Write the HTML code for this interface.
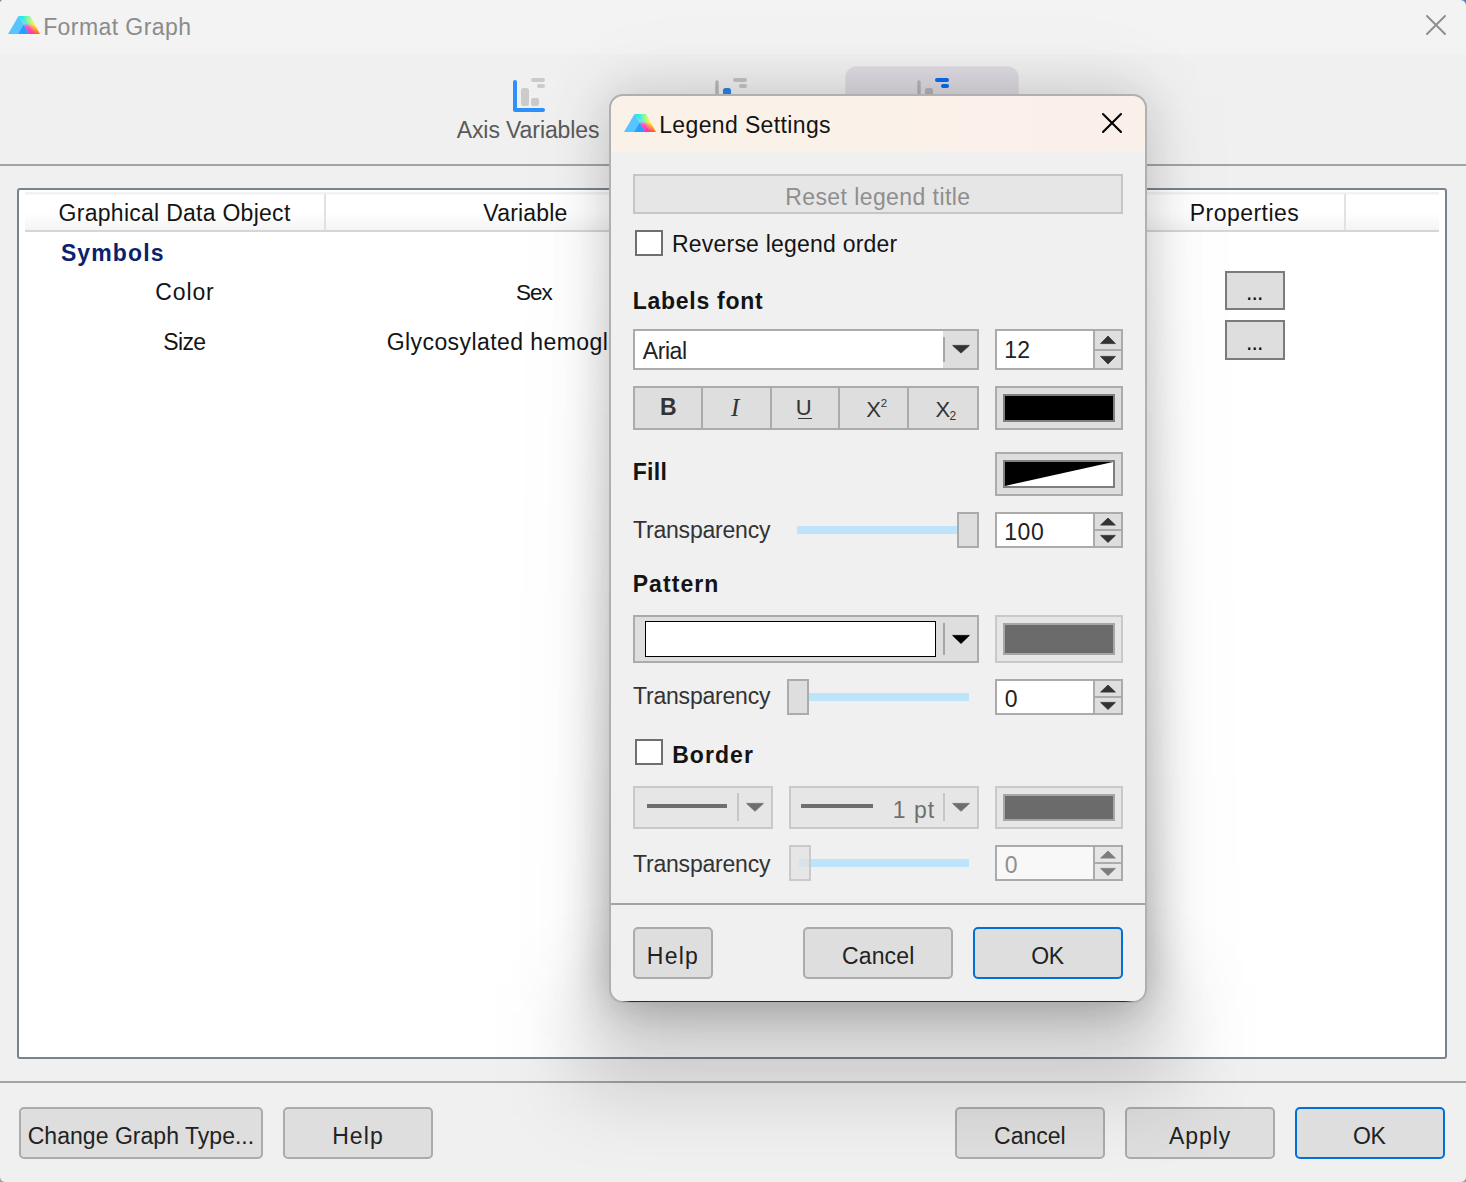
<!DOCTYPE html>
<html lang="en"><head><meta charset="utf-8"><title>Format Graph</title>
<style>
html,body{margin:0;padding:0;}
body{width:1466px;height:1182px;overflow:hidden;background:#f0f0f0;font-family:"Liberation Sans",sans-serif;position:relative;}
#win,#dlgwrap{position:absolute;left:0;top:0;width:1466px;height:1182px;overflow:hidden;}
.a{position:absolute;box-sizing:border-box;}
span.t{position:absolute;white-space:nowrap;font-family:"Liberation Sans",sans-serif;}
.btn{position:absolute;box-sizing:border-box;background:#dedede;border:2px solid #ababab;border-radius:5px;}
.btn.def{border-color:#0070d8;}
.sq{position:absolute;box-sizing:border-box;background:#dedede;border:2px solid #ababab;}
.dis{background:#e6e6e6;border-color:#c9c9c9;}
.hl{position:absolute;height:2px;background:#a3a3a3;}
svg{position:absolute;overflow:visible;}

</style></head>
<body>
<div id="win">
<div class="a" style="left:0;top:0;width:1466px;height:54px;background:#f3f3f3"></div>
<svg style="left:8px;top:16px" width="32" height="18" viewBox="0 0 32 18">
<defs>
<linearGradient id="gR" x1="0" y1="0" x2="0" y2="1"><stop offset="0" stop-color="#86f7a4"/><stop offset=".22" stop-color="#c4fb72"/><stop offset=".48" stop-color="#fdee3c"/><stop offset=".75" stop-color="#ffa62c"/><stop offset="1" stop-color="#ff6612"/></linearGradient>
<linearGradient id="gL" x1="0" y1="0" x2="0" y2="1"><stop offset="0" stop-color="#25e4ea"/><stop offset=".4" stop-color="#5cf0dc"/><stop offset=".58" stop-color="#ff58c2"/><stop offset="1" stop-color="#ff2fb0"/></linearGradient>
<linearGradient id="gM" gradientUnits="userSpaceOnUse" x1="15.75" y1="9" x2="24.33" y2="4"><stop offset="0" stop-color="#fff"/><stop offset=".3" stop-color="#fff"/><stop offset=".85" stop-color="#000"/></linearGradient>
<mask id="mk" maskUnits="userSpaceOnUse" x="0" y="0" width="32" height="18"><rect width="32" height="18" fill="url(#gM)"/></mask>
</defs>
<polygon points="10.5,0 22,0 32,18 21,18" fill="url(#gR)"/>
<polygon points="10.5,0 22,0 32,18 21,18" fill="url(#gL)" mask="url(#mk)"/>
<polygon points="0,18 10.5,0 21,18" fill="#55c4ff"/>
<polygon points="10.3,18 15.7,8.8 21,18" fill="#2a9cfc"/>
</svg>
<svg style="left:1426px;top:15px" width="20" height="20" viewBox="0 0 20 20"><path d="M1 1L19 19M19 1L1 19" stroke="#8f8f8f" stroke-width="2" stroke-linecap="round" fill="none"/></svg>
<!-- toolbar icons -->
<svg style="left:505px;top:70px" width="50" height="50" viewBox="505 70 50 50">
<path d="M515 82V110H543" stroke="#2e90fa" stroke-width="4" stroke-linecap="round" stroke-linejoin="round" fill="none"/>
<rect x="521" y="88" width="8" height="18" rx="2.5" fill="#cbcbcb"/><rect x="531" y="98" width="8" height="8" rx="2.5" fill="#cbcbcb"/>
<rect x="531" y="78" width="14" height="4" rx="2" fill="#cbcbcb"/><rect x="537" y="84" width="8" height="4" rx="2" fill="#cbcbcb"/>
</svg>
<svg style="left:707px;top:70px" width="50" height="50" viewBox="707 70 50 50">
<path d="M717 82V110H744" stroke="#b9b9b9" stroke-width="3.4" stroke-linecap="round" stroke-linejoin="round" fill="none"/>
<rect x="723" y="88" width="8" height="18" rx="2.5" fill="#2b84ea"/><rect x="733" y="98" width="8" height="8" rx="2.5" fill="#cbcbcb"/>
<rect x="733" y="78" width="14" height="4" rx="2" fill="#c4c4c4"/><rect x="739" y="84" width="8" height="4" rx="2" fill="#c4c4c4"/>
</svg>
<div class="a" style="left:845px;top:66px;width:174px;height:86px;border-radius:11px;background:#dddbe1;border:1px solid #e4e2e8"></div>
<svg style="left:909px;top:70px" width="50" height="50" viewBox="909 70 50 50">
<path d="M919 82V110H946" stroke="#b4b3b6" stroke-width="3.4" stroke-linecap="round" stroke-linejoin="round" fill="none"/>
<rect x="925" y="88" width="8" height="18" rx="2.5" fill="#b4b3b6"/><rect x="935" y="98" width="8" height="8" rx="2.5" fill="#b4b3b6"/>
<rect x="935" y="78" width="14" height="4" rx="2" fill="#0a6cf0"/><rect x="941" y="84" width="8" height="4" rx="2" fill="#0a6cf0"/>
</svg>
<div class="hl" style="left:0;top:164px;width:1466px"></div>
<!-- table -->
<div class="a" style="left:17px;top:188px;width:1430px;height:871px;background:#fff;border:2px solid #7a828f;border-radius:3px"></div>
<div class="a" style="left:25px;top:192px;width:1414px;height:40px;background:linear-gradient(#f2f2f2 0,#f2f2f2 2px,#fff 3px,#fff 55%,#f4f4f5 100%);border-bottom:2px solid #d6d6d6"></div>
<div class="a" style="left:324px;top:194px;width:2px;height:36px;background:#e2e2e2"></div>
<div class="a" style="left:1344px;top:194px;width:2px;height:36px;background:#e2e2e2"></div>
<div class="a" style="left:1225px;top:271px;width:60px;height:39px;background:#dedede;border:2px solid #7b7b7b"></div>
<div class="a" style="left:1225px;top:320px;width:60px;height:40px;background:#dedede;border:2px solid #7b7b7b"></div>
<div class="hl" style="left:0;top:1081px;width:1466px"></div>
<div class="btn" style="left:19px;top:1107px;width:244px;height:52px"></div>
<div class="btn" style="left:283px;top:1107px;width:150px;height:52px"></div>
<div class="btn" style="left:955px;top:1107px;width:150px;height:52px"></div>
<div class="btn" style="left:1125px;top:1107px;width:150px;height:52px"></div>
<div class="btn def" style="left:1295px;top:1107px;width:150px;height:52px"></div>
<div class="a" style="left:0;top:0;width:4px;height:4px;background:radial-gradient(circle at 100% 100%,rgba(142,142,142,0) 3.8px,#8e8e8e 4.8px)"></div>
<div class="a" style="left:1461px;top:0;width:5px;height:5px;background:radial-gradient(circle at 0 100%,rgba(58,134,200,0) 4.2px,#3a86c8 5.4px)"></div>
<div class="a" style="left:0;top:1177px;width:5px;height:5px;background:radial-gradient(circle at 100% 0,rgba(154,154,154,0) 4.4px,#9a9a9a 5.4px)"></div>
<div class="a" style="left:1461px;top:1177px;width:5px;height:5px;background:radial-gradient(circle at 0 0,rgba(154,154,154,0) 4.4px,#9a9a9a 5.4px)"></div>

<span class="t" id="t0" style="left:43.15px;top:15.73px;font-size:23px;line-height:23px;color:#8b8b8b;letter-spacing:0.424px;">Format Graph</span>
<span class="t" id="t1" style="left:456.73px;top:118.83px;font-size:23px;line-height:23px;color:#5a5a5a;letter-spacing:-0.095px;">Axis Variables</span>
<span class="t" id="t2" style="left:58.61px;top:202.03px;font-size:23px;line-height:23px;color:#141414;letter-spacing:0.270px;">Graphical Data Object</span>
<span class="t" id="t3" style="left:483.37px;top:202.03px;font-size:23px;line-height:23px;color:#141414;letter-spacing:0.194px;">Variable</span>
<span class="t" id="t4" style="left:1189.72px;top:202.03px;font-size:23px;line-height:23px;color:#141414;letter-spacing:0.477px;">Properties</span>
<span class="t" id="t5" style="left:60.91px;top:241.73px;font-size:23px;line-height:23px;color:#0d1f6e;font-weight:700;letter-spacing:1.117px;">Symbols</span>
<span class="t" id="t6" style="left:155.19px;top:281.23px;font-size:23px;line-height:23px;color:#141414;letter-spacing:0.894px;">Color</span>
<span class="t" id="t7" style="left:516.11px;top:281.65px;font-size:22.5px;line-height:22.5px;color:#141414;letter-spacing:-1.127px;">Sex</span>
<span class="t" id="t8" style="left:163.32px;top:331.03px;font-size:23px;line-height:23px;color:#141414;letter-spacing:-0.658px;">Size</span>
<span class="t" id="t9" style="left:386.68px;top:331.03px;font-size:23px;line-height:23px;color:#141414;letter-spacing:0.428px;">Glycosylated hemoglobin</span>
<span class="t" id="t10" style="left:1246.07px;top:281.03px;font-size:23px;line-height:23px;color:#141414;letter-spacing:-0.934px;">...</span>
<span class="t" id="t11" style="left:1246.07px;top:330.53px;font-size:23px;line-height:23px;color:#141414;letter-spacing:-0.934px;">...</span>
<span class="t" id="t12" style="left:27.74px;top:1124.73px;font-size:23px;line-height:23px;color:#222;letter-spacing:0.029px;">Change Graph Type...</span>
<span class="t" id="t13" style="left:332.14px;top:1124.73px;font-size:23px;line-height:23px;color:#222;letter-spacing:1.134px;">Help</span>
<span class="t" id="t14" style="left:994.11px;top:1124.73px;font-size:23px;line-height:23px;color:#222;letter-spacing:-0.037px;">Cancel</span>
<span class="t" id="t15" style="left:1169.01px;top:1124.73px;font-size:23px;line-height:23px;color:#222;letter-spacing:0.905px;">Apply</span>
<span class="t" id="t16" style="left:1352.96px;top:1124.73px;font-size:23px;line-height:23px;color:#222;letter-spacing:-0.366px;">OK</span>
</div>
<div id="dlgwrap">
<div class="a" style="left:609px;top:94px;width:538px;height:909px;border-radius:14px;background:linear-gradient(rgba(0,0,0,.04),rgba(0,0,0,.08));filter:blur(50px)"></div>
<div class="a" style="left:609px;top:94px;width:538px;height:909px;border-radius:14px;background:linear-gradient(rgba(0,0,0,.17),rgba(0,0,0,.40));filter:blur(26px)"></div>
<div class="a" style="left:579px;top:984px;width:598px;height:106px;background:rgba(0,0,0,.155);filter:blur(40px)"></div>
<div class="a" id="dlg" style="left:609px;top:94px;width:538px;height:909px;border:2px solid #b0b0b0;border-radius:14px;background:linear-gradient(#f0f0f0,#f0f0f0) 0 56px/100% 100% no-repeat,linear-gradient(90deg,#faf2e8,#faf1e9 55%,#faf0ea);"></div>
<div class="a" style="left:621px;top:1001.2px;width:514px;height:1.2px;background:linear-gradient(90deg,rgba(40,40,40,0),#2c2c2c 10px,#2c2c2c 504px,rgba(40,40,40,0))"></div>
<svg style="left:624px;top:114px" width="32" height="18" viewBox="0 0 32 18">
<polygon points="10.5,0 22,0 32,18 21,18" fill="url(#gR)"/>
<polygon points="10.5,0 22,0 32,18 21,18" fill="url(#gL)" mask="url(#mk)"/>
<polygon points="0,18 10.5,0 21,18" fill="#55c4ff"/>
<polygon points="10.3,18 15.7,8.8 21,18" fill="#2a9cfc"/>
</svg>
<svg style="left:1102px;top:113px" width="20" height="20" viewBox="0 0 20 20"><path d="M1 1L19 19M19 1L1 19" stroke="#000" stroke-width="2.1" stroke-linecap="round" fill="none"/></svg>
<div class="sq" style="left:633px;top:174px;width:490px;height:40px;background:#e6e6e6;border-color:#c6c6c6;"></div>
<div class="sq" style="left:635px;top:230px;width:28px;height:26px;background:#fff;border-color:#6f6f6f;"></div>
<div class="sq" style="left:633px;top:329px;width:346px;height:41px;background:#fff;"></div>
<div class="a" style="left:943px;top:331px;width:34px;height:37px;background:#dedede"></div>
<div class="a" style="left:943px;top:337px;width:2px;height:25px;background:#a6a6a6"></div>
<svg style="left:952.3px;top:345px" width="18.0" height="8.100000000000023" viewBox="0 0 18.0 8.100000000000023"><path d="M0.6 0.4H17.4L9.0 8.100000000000023Z" fill="#333" stroke="#333" stroke-width="0.8" stroke-linejoin="round"/></svg>
<div class="sq" style="left:995px;top:329px;width:128px;height:41px;background:#fff;border-color:#ababab;"></div>
<div class="a" style="left:1093px;top:331px;width:28px;height:37px;background:#dedede"></div>
<div class="a" style="left:1093px;top:331px;width:2px;height:37px;background:#ababab"></div>
<div class="a" style="left:1095px;top:348.5px;width:26px;height:2.0px;background:#ababab"></div>
<svg style="left:1100px;top:336px" width="16" height="8" viewBox="0 0 16 8"><path d="M0.6 7.6H15.4L8.0 0Z" fill="#333" stroke="#333" stroke-width="0.8" stroke-linejoin="round"/></svg>
<svg style="left:1100px;top:356px" width="16" height="8" viewBox="0 0 16 8"><path d="M0.6 0.4H15.4L8.0 8Z" fill="#333" stroke="#333" stroke-width="0.8" stroke-linejoin="round"/></svg>
<div class="sq" style="left:633px;top:386px;width:346px;height:44px;"></div>
<div class="a" style="left:701px;top:388px;width:2px;height:40px;background:#ababab"></div>
<div class="a" style="left:770px;top:388px;width:2px;height:40px;background:#ababab"></div>
<div class="a" style="left:838px;top:388px;width:2px;height:40px;background:#ababab"></div>
<div class="a" style="left:907px;top:388px;width:2px;height:40px;background:#ababab"></div>
<div class="a" style="left:797.6px;top:417.6px;width:14.0px;height:1.6999999999999886px;background:#333"></div>
<div class="sq" style="left:995px;top:386px;width:128px;height:44px;"></div>
<div class="a" style="left:1003px;top:394px;width:112px;height:28px;border:2px solid #7f7f7f;background:#000"></div>
<div class="sq" style="left:995px;top:452px;width:128px;height:44px;"></div>
<div class="a" style="left:1003px;top:460px;width:112px;height:28px;border:2px solid #7f7f7f;background:#fff"><svg style="left:0;top:0" width="108" height="24" viewBox="0 0 108 24"><polygon points="0,0 108,0 0,24" fill="#000"/></svg></div>
<div class="a" style="left:797px;top:526px;width:161px;height:8px;background:#bde4fb"></div>
<div class="sq" style="left:957px;top:512px;width:22px;height:36px;"></div>
<div class="sq" style="left:995px;top:512px;width:128px;height:36px;background:#fff;border-color:#ababab;"></div>
<div class="a" style="left:1093px;top:514px;width:28px;height:32px;background:#dedede"></div>
<div class="a" style="left:1093px;top:514px;width:2px;height:32px;background:#ababab"></div>
<div class="a" style="left:1095px;top:529.0px;width:26px;height:2.0px;background:#ababab"></div>
<svg style="left:1100px;top:518px" width="16" height="7.5" viewBox="0 0 16 7.5"><path d="M0.6 7.1H15.4L8.0 0Z" fill="#333" stroke="#333" stroke-width="0.8" stroke-linejoin="round"/></svg>
<svg style="left:1100px;top:535.0px" width="16" height="7.5" viewBox="0 0 16 7.5"><path d="M0.6 0.4H15.4L8.0 7.5Z" fill="#333" stroke="#333" stroke-width="0.8" stroke-linejoin="round"/></svg>
<div class="sq" style="left:633px;top:615px;width:346px;height:48px;"></div>
<div class="a" style="left:644.5px;top:620.5px;width:291px;height:36px;background:#fff;border:1.6px solid #000"></div>
<div class="a" style="left:943px;top:623px;width:2px;height:32px;background:#a6a6a6"></div>
<svg style="left:952px;top:635px" width="18" height="8.5" viewBox="0 0 18 8.5"><path d="M0.6 0.4H17.4L9.0 8.5Z" fill="#000" stroke="#000" stroke-width="0.8" stroke-linejoin="round"/></svg>
<div class="sq dis" style="left:995px;top:615px;width:128px;height:48px;"></div>
<div class="a" style="left:1003px;top:623px;width:112px;height:32px;border:2px solid #a6a6a6;background:#6b6b6b"></div>
<div class="a" style="left:808px;top:692.5px;width:161px;height:8.0px;background:#bde4fb"></div>
<div class="sq" style="left:787px;top:679px;width:22px;height:36px;"></div>
<div class="sq" style="left:995px;top:679px;width:128px;height:36px;background:#fff;border-color:#ababab;"></div>
<div class="a" style="left:1093px;top:681px;width:28px;height:32px;background:#dedede"></div>
<div class="a" style="left:1093px;top:681px;width:2px;height:32px;background:#ababab"></div>
<div class="a" style="left:1095px;top:696.0px;width:26px;height:2.0px;background:#ababab"></div>
<svg style="left:1100px;top:685px" width="16" height="7.5" viewBox="0 0 16 7.5"><path d="M0.6 7.1H15.4L8.0 0Z" fill="#333" stroke="#333" stroke-width="0.8" stroke-linejoin="round"/></svg>
<svg style="left:1100px;top:702.0px" width="16" height="7.5" viewBox="0 0 16 7.5"><path d="M0.6 0.4H15.4L8.0 7.5Z" fill="#333" stroke="#333" stroke-width="0.8" stroke-linejoin="round"/></svg>
<div class="sq" style="left:635px;top:739px;width:28px;height:26px;background:#fff;border-color:#6f6f6f;"></div>
<div class="sq dis" style="left:633px;top:785.5px;width:140px;height:43.0px;"></div>
<div class="a" style="left:647px;top:804px;width:80px;height:4px;background:#6e6e6e"></div>
<div class="a" style="left:737px;top:793px;width:2px;height:28px;background:#c6c6c6"></div>
<svg style="left:746px;top:803px" width="18" height="8.299999999999955" viewBox="0 0 18 8.299999999999955"><path d="M0.6 0.4H17.4L9.0 8.299999999999955Z" fill="#6e6e6e" stroke="#6e6e6e" stroke-width="0.8" stroke-linejoin="round"/></svg>
<div class="sq dis" style="left:789px;top:785.5px;width:190px;height:43.0px;"></div>
<div class="a" style="left:801px;top:804px;width:72px;height:4px;background:#6e6e6e"></div>
<div class="a" style="left:943px;top:793px;width:2px;height:28px;background:#c6c6c6"></div>
<svg style="left:952px;top:803px" width="18" height="8.299999999999955" viewBox="0 0 18 8.299999999999955"><path d="M0.6 0.4H17.4L9.0 8.299999999999955Z" fill="#6e6e6e" stroke="#6e6e6e" stroke-width="0.8" stroke-linejoin="round"/></svg>
<div class="sq dis" style="left:995px;top:785.5px;width:128px;height:43.0px;"></div>
<div class="a" style="left:1003px;top:793.5px;width:112px;height:27.0px;border:2px solid #a6a6a6;background:#6b6b6b"></div>
<div class="a" style="left:799px;top:859px;width:170px;height:8px;background:#bde4fb"></div>
<div class="sq" style="left:789px;top:845px;width:22px;height:36px;background:rgba(226,226,226,.72);border-color:#cacaca;"></div>
<div class="sq" style="left:995px;top:845px;width:128px;height:36px;background:#f8f8f8;border-color:#ababab;"></div>
<div class="a" style="left:1093px;top:847px;width:28px;height:32px;background:#e6e6e6"></div>
<div class="a" style="left:1093px;top:847px;width:2px;height:32px;background:#ababab"></div>
<div class="a" style="left:1095px;top:862.0px;width:26px;height:2.0px;background:#ababab"></div>
<svg style="left:1100px;top:851px" width="16" height="7.5" viewBox="0 0 16 7.5"><path d="M0.6 7.1H15.4L8.0 0Z" fill="#7d7d7d" stroke="#7d7d7d" stroke-width="0.8" stroke-linejoin="round"/></svg>
<svg style="left:1100px;top:868.0px" width="16" height="7.5" viewBox="0 0 16 7.5"><path d="M0.6 0.4H15.4L8.0 7.5Z" fill="#7d7d7d" stroke="#7d7d7d" stroke-width="0.8" stroke-linejoin="round"/></svg>
<div class="a" style="left:611px;top:902.5px;width:534px;height:2.5px;background:#a3a3a3"></div>
<div class="btn" style="left:633px;top:927px;width:80px;height:52px"></div>
<div class="btn" style="left:803px;top:927px;width:150px;height:52px"></div>
<div class="btn def" style="left:973px;top:927px;width:150px;height:52px"></div>
<span class="t" id="t17" style="left:659.23px;top:114.03px;font-size:23px;line-height:23px;color:#141414;letter-spacing:0.364px;">Legend Settings</span>
<span class="t" id="t18" style="left:785.15px;top:185.63px;font-size:23px;line-height:23px;color:#8e8e8e;letter-spacing:0.423px;">Reset legend title</span>
<span class="t" id="t19" style="left:672.01px;top:233.23px;font-size:23px;line-height:23px;color:#141414;letter-spacing:0.212px;">Reverse legend order</span>
<span class="t" id="t20" style="left:632.66px;top:289.53px;font-size:23px;line-height:23px;color:#141414;font-weight:700;letter-spacing:0.738px;">Labels font</span>
<span class="t" id="t21" style="left:642.87px;top:339.73px;font-size:23px;line-height:23px;color:#222;letter-spacing:-0.462px;">Arial</span>
<span class="t" id="t22" style="left:1004.15px;top:339.33px;font-size:23px;line-height:23px;color:#222;letter-spacing:0.318px;">12</span>
<span class="t" id="t23" style="left:660.03px;top:396.43px;font-size:23px;line-height:23px;color:#333;font-weight:700;letter-spacing:-0.155px;">B</span>
<span class="t" id="t24" style="left:731.07px;top:394.74px;font-size:25px;line-height:25px;color:#333;letter-spacing:5.822px;font-family:&quot;Liberation Serif&quot;,serif;font-style:italic;">I</span>
<span class="t" id="t25" style="left:795.77px;top:396.78px;font-size:22px;line-height:22px;color:#333;letter-spacing:0.089px;">U</span>
<span class="t" id="t26" style="left:866.31px;top:399.38px;font-size:22px;line-height:22px;color:#333;letter-spacing:0.293px;">X</span>
<span class="t" id="t27" style="left:880.84px;top:398.27px;font-size:11.5px;line-height:11.5px;color:#333;">2</span>
<span class="t" id="t28" style="left:935.45px;top:399.38px;font-size:22px;line-height:22px;color:#333;letter-spacing:0.092px;">X</span>
<span class="t" id="t29" style="left:949.54px;top:409.64px;font-size:12px;line-height:12px;color:#333;">2</span>
<span class="t" id="t30" style="left:632.66px;top:461.13px;font-size:23px;line-height:23px;color:#141414;font-weight:700;letter-spacing:0.351px;">Fill</span>
<span class="t" id="t31" style="left:632.96px;top:519.23px;font-size:23px;line-height:23px;color:#333;letter-spacing:-0.201px;">Transparency</span>
<span class="t" id="t32" style="left:1004.15px;top:521.33px;font-size:23px;line-height:23px;color:#222;letter-spacing:0.672px;">100</span>
<span class="t" id="t33" style="left:632.66px;top:573.13px;font-size:23px;line-height:23px;color:#141414;font-weight:700;letter-spacing:1.086px;">Pattern</span>
<span class="t" id="t34" style="left:632.96px;top:685.23px;font-size:23px;line-height:23px;color:#333;letter-spacing:-0.201px;">Transparency</span>
<span class="t" id="t35" style="left:1004.63px;top:688.03px;font-size:23px;line-height:23px;color:#222;letter-spacing:1.173px;">0</span>
<span class="t" id="t36" style="left:672.16px;top:744.03px;font-size:23px;line-height:23px;color:#141414;font-weight:700;letter-spacing:1.073px;">Border</span>
<span class="t" id="t37" style="left:892.87px;top:798.53px;font-size:23px;line-height:23px;color:#707070;letter-spacing:1.009px;">1 pt</span>
<span class="t" id="t38" style="left:632.96px;top:852.73px;font-size:23px;line-height:23px;color:#333;letter-spacing:-0.201px;">Transparency</span>
<span class="t" id="t39" style="left:1004.63px;top:854.03px;font-size:23px;line-height:23px;color:#8e8e8e;letter-spacing:1.173px;">0</span>
<span class="t" id="t40" style="left:646.79px;top:945.23px;font-size:23px;line-height:23px;color:#222;letter-spacing:1.259px;">Help</span>
<span class="t" id="t41" style="left:841.96px;top:945.23px;font-size:23px;line-height:23px;color:#222;letter-spacing:0.145px;">Cancel</span>
<span class="t" id="t42" style="left:1031.19px;top:945.23px;font-size:23px;line-height:23px;color:#222;letter-spacing:-0.319px;">OK</span>
</div>
</body></html>
